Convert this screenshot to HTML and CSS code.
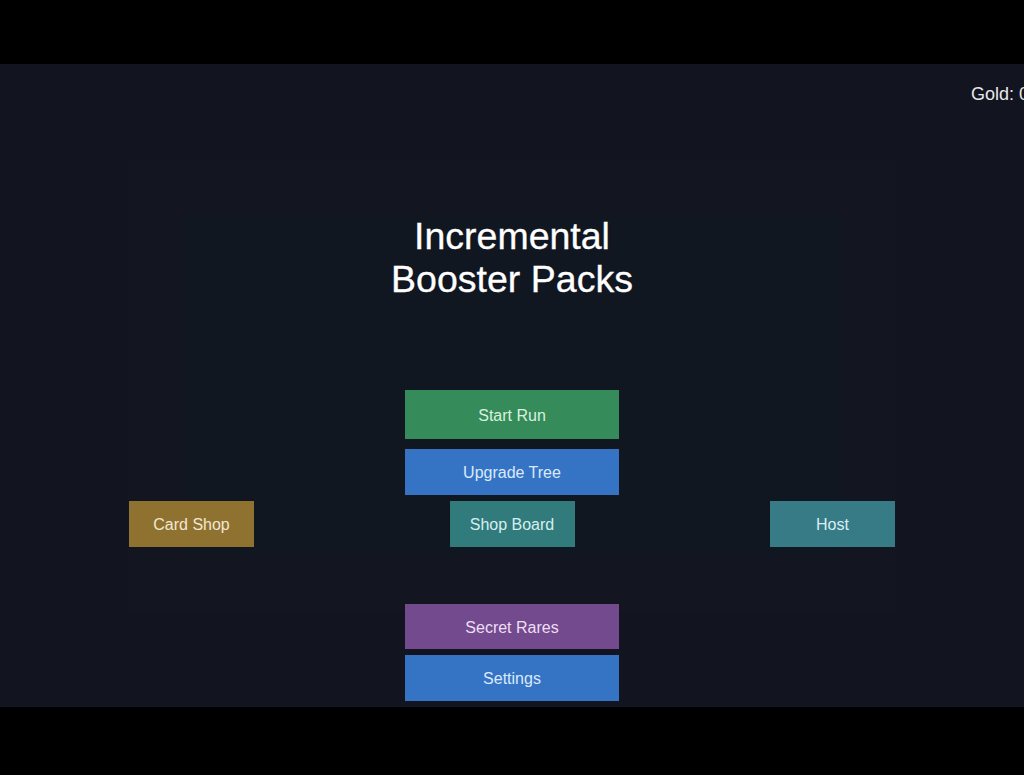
FILE: index.html
```html
<!DOCTYPE html>
<html>
<head>
<meta charset="utf-8">
<link rel="stylesheet" href="styles.css">
</head>
<body>
<div class="screen">
  <div class="gold">Gold: 0</div>
  <h1 class="title">Incremental<br>Booster Packs</h1>
  <div class="menu">
    <button class="btn btn-main btn-green btn-start">Start Run</button>
    <button class="btn btn-main btn-blue btn-upgrade">Upgrade Tree</button>
    <div class="row">
      <button class="btn btn-small btn-gold">Card Shop</button>
      <button class="btn btn-small btn-teal">Shop Board</button>
      <button class="btn btn-small btn-cyan">Host</button>
    </div>
    <button class="btn btn-main btn-purple btn-secret">Secret Rares</button>
    <button class="btn btn-main btn-blue">Settings</button>
  </div>
</div>
</body>
</html>
```
FILE: styles.css
```css
html, body {
  margin: 0;
  padding: 0;
  background: #000;
  height: 100%;
  overflow: hidden;
}
body {
  font-family: "Liberation Sans", Arial, sans-serif;
}
.screen {
  position: relative;
  margin-top: 64px;
  height: 643px;
  overflow: hidden;
  display: flex;
  flex-direction: column;
  align-items: center;
  background:
    linear-gradient(#111721, #111721) 184px 151px / 656px 340px no-repeat,
    linear-gradient(#131621, #131621) 128px 96px / 768px 452px no-repeat,
    #12141f;
}
.gold {
  position: absolute;
  top: 19px;
  left: 971px;
  white-space: nowrap;
  color: #e8e8ea;
  font-size: 18px;
  line-height: 22px;
}
.title {
  margin: 151px 0 0;
  font-weight: normal;
  font-size: 37.5px;
  line-height: 43px;
  color: #ffffff;
  text-align: center;
  -webkit-text-stroke: 0.3px #ffffff;
}
.menu {
  margin-top: 89px;
  display: flex;
  flex-direction: column;
  align-items: center;
  width: 766px;
}
.btn {
  border: none;
  padding: 2px 0 0;
  margin: 0;
  font-family: "Liberation Sans", Arial, sans-serif;
  font-size: 16px;
  height: 46px;
  cursor: pointer;
}
.btn-main { width: 214px; }
.btn-small { width: 125px; }
.btn-start { height: 49px; margin-bottom: 10px; }
.btn-upgrade { margin-bottom: 6px; }
.btn-secret { height: 45px; margin-bottom: 6px; }
.row {
  width: 766px;
  display: flex;
  justify-content: space-between;
  margin-bottom: 57px;
}
.btn-green { background: #358c5a; color: #d8f2df; }
.btn-blue { background: #3574c4; color: #dbe9fb; }
.btn-gold { background: #8f722f; color: #f1e7d2; }
.btn-teal { background: #317b7d; color: #d7eeee; }
.btn-cyan { background: #377b86; color: #d9eef3; }
.btn-purple { background: #744a8f; color: #ecdff4; }
```
